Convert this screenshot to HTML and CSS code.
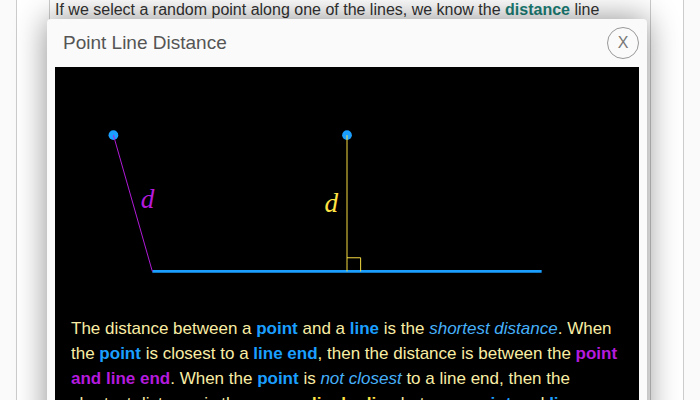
FILE: index.html
```html
<!DOCTYPE html>
<html lang="en">
<head>
<meta charset="utf-8">
<title>Point Line Distance</title>
<meta name="viewport" content="width=device-width, initial-scale=1">
<link rel="stylesheet" href="styles.css">
</head>
<body>
<main class="page">
  <article class="lesson">
    <p class="lesson-text">If we select a random point along one of the lines, we know the <strong class="term">distance</strong> line</p>
  </article>
</main>
<div class="overlay">
  <section class="modal" role="dialog" aria-labelledby="modal-title">
    <header class="modal-header">
      <h1 class="modal-title" id="modal-title">Point Line Distance</h1>
      <button class="close" type="button" aria-label="Close">X</button>
    </header>
    <div class="modal-body">
      <svg class="figure" viewBox="0 0 600 240" role="img" aria-label="Distance from a point to a line">
        <circle class="dot" cx="60" cy="70" r="5"/>
        <circle class="dot" cx="300" cy="70" r="5"/>
        <line class="base-line" x1="100" y1="210" x2="500" y2="210"/>
        <line class="end-distance" x1="60" y1="70" x2="100" y2="210"/>
        <path class="perpendicular" d="M300 70V210M300 196H314V210"/>
        <text class="label label-end" x="88" y="145">d</text>
        <text class="label label-perpendicular" x="277" y="149">d</text>
      </svg>
      <p class="explanation">The distance between a <b class="blue">point</b> and a <b class="blue">line</b> is the <em>shortest distance</em>. When the <b class="blue">point</b> is closest to a <b class="blue">line end</b>, then the distance is between the <b class="purple">point and line end</b>. When the <b class="blue">point</b> is <em>not closest</em> to a line end, then the shortest distance is the <b class="yellow">perpendicular line</b> between <b class="blue">point</b> and <b class="blue">line</b>.</p>
    </div>
  </section>
</div>
</body>
</html>
```
FILE: styles.css
```css
* {
  box-sizing: border-box;
}

body {
  margin: 0;
  height: 100vh;
  overflow: hidden;
  background: #fafafa;
  color: #333;
  font-family: "Liberation Sans", Arial, sans-serif;
}

.page {
  min-height: 100vh;
  margin: 0 16px;
  padding: 0 32px;
  display: flex;
  background: #fff;
  border: solid #ccc;
  border-width: 0 1px;
}

.lesson {
  flex: 1;
  padding: 0 5px;
  border: solid #ccc;
  border-width: 0 1px;
}

.lesson-text {
  margin: 0;
  font-size: 16px;
  line-height: 20px;
}

.term {
  color: #1a8077;
}

.overlay {
  position: absolute;
  inset: 0;
  padding: 19px 53px 0 47px;
  overflow: hidden;
}

.modal {
  padding: 0 8px 8px;
  background: #fafafa;
  border-radius: 4px;
  box-shadow: 0 0 32px rgba(0, 0, 0, 0.45);
}

.modal-header {
  height: 48px;
  padding-left: 8px;
  display: flex;
  align-items: center;
  justify-content: space-between;
}

.modal-title {
  margin: 0;
  color: #555;
  font-size: 19px;
  font-weight: normal;
}

.close {
  width: 32px;
  height: 32px;
  padding: 0;
  border: 1px solid #999;
  border-radius: 50%;
  background: transparent;
  color: #777;
  font: 16px "Liberation Sans", Arial, sans-serif;
}

.modal-body {
  background: #000;
}

.figure {
  display: block;
  width: 100%;
}

.dot {
  fill: #1b9fff;
}

.base-line {
  stroke: #1b9fff;
  stroke-width: 3;
}

.end-distance {
  stroke: #b41bdc;
}

.perpendicular {
  fill: none;
  stroke: #ffe244;
}

.label {
  font: italic 28px "Liberation Serif", "Times New Roman", serif;
}

.label-end {
  fill: #b41bdc;
}

.label-perpendicular {
  fill: #ffe244;
}

.explanation {
  margin: 0;
  padding: 15px 16px;
  color: #f9eda4;
  font-size: 17px;
  line-height: 25px;
}

.explanation em {
  color: #46b0fa;
}

.blue {
  color: #1b9fff;
}

.purple {
  color: #b41bdc;
}

.yellow {
  color: #ffe244;
}
```
